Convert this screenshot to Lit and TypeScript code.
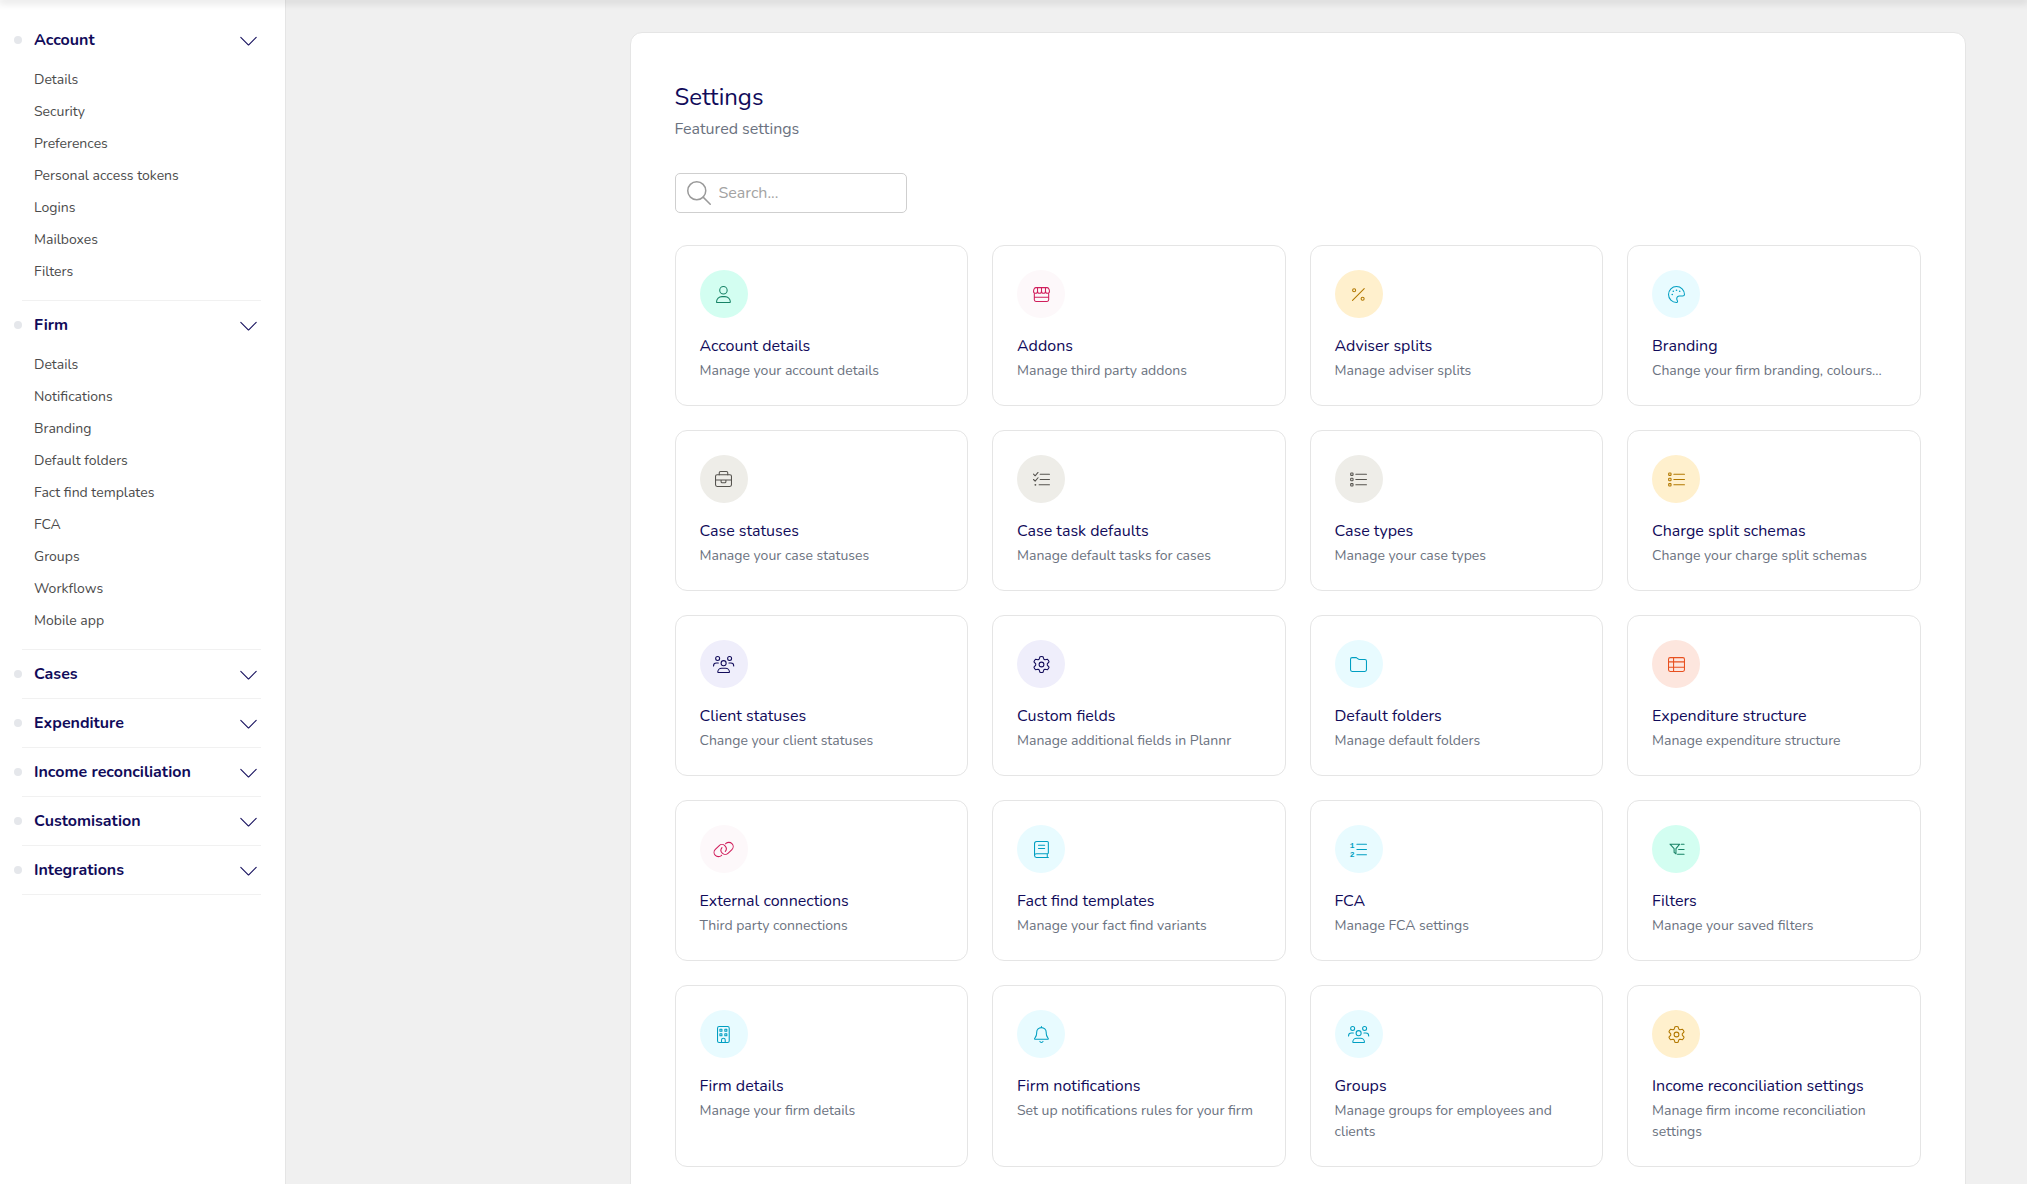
import { LitElement, html, css, svg, type SVGTemplateResult } from "lit";
import { customElement, property, state } from "lit/decorators.js";

interface Glyph {
  width: number;
  body: SVGTemplateResult;
}

// Every glyph is 512 units high; the width follows its own proportions.
const ICONS: Record<string, Glyph> = {
  user: {
    width: 448,
    body: svg`<circle cx="224" cy="128" r="112"/><path d="M16 482.300C16 392.700 88.700 320 178.300 320h91.400C359.300 320 432 392.700 432 482.300c0 7.600-6.100 13.700-13.700 13.700H29.700C22.100 496 16 489.900 16 482.300z"/>`,
  },
  shop: {
    width: 512,
    body: svg`<path d="M40 214v202c0 26 22 48 48 48h336c26 0 48-22 48-48V214M40 336h432M88 48h336c20 0 36 10 46 27 17 28 26 55 26 82 0 37-24 63-60 63s-60-26-60-63c0 37-24 63-60 63s-60-26-60-63c0 37-24 63-60 63s-60-26-60-63c0 37-24 63-60 63s-60-26-60-63c0-27 9-54 26-82 10-17 26-27 46-27zM136 157V48M256 157V48M376 157V48"/>`,
  },
  percent: {
    width: 384,
    body: svg`<path d="M368 80L16 432"/><circle cx="64" cy="128" r="46"/><circle cx="320" cy="384" r="46"/>`,
  },
  palette: {
    width: 512,
    body: svg`<path d="M496 256C496 123 388 16 256 16S16 123 16 256s107 240 240 240c4 0 7 0 10-.2 13-1 22-12 22-26 0-12-7-26-12-38-6-13-10-24-12-39-8-50 30-89 80-89h96c30 0 56-20 56-48z"/><circle class="dot" cx="128" cy="256" r="24"/><circle class="dot" cx="160" cy="160" r="24"/><circle class="dot" cx="256" cy="128" r="24"/><circle class="dot" cx="352" cy="160" r="24"/>`,
  },
  briefcase: {
    width: 512,
    body: svg`<rect x="16" y="112" width="480" height="352" rx="48"/><path d="M128 112V56c0-22 18-40 40-40h176c22 0 40 18 40 40v56M16 272h480M184 272v48c0 18 14 32 32 32h80c18 0 32-14 32-32v-48"/>`,
  },
  checklist: {
    width: 512,
    body: svg`<path d="M216 96h280M216 256h280M184 416h312M16 96l48 48 88-100M16 256l48 48 88-100"/><circle class="dot" cx="72" cy="416" r="28"/>`,
  },
  list: {
    width: 512,
    body: svg`<rect x="20" y="60" width="72" height="72" rx="20"/><rect x="20" y="220" width="72" height="72" rx="20"/><rect x="20" y="380" width="72" height="72" rx="20"/><path d="M176 96h320M176 256h320M176 416h320"/>`,
  },
  people: {
    width: 640,
    body: svg`<circle cx="140" cy="76" r="60"/><circle cx="500" cy="76" r="60"/><circle cx="320" cy="216" r="76"/><path d="M16 298c0-47 38-85 85-85h60M624 298c0-47-38-85-85-85h-60M144 485C144 420 197 368 262 368h116c65 0 118 52 118 117 0 6-5 11-11 11H155c-6 0-11-5-11-11z"/>`,
  },
  cog: {
    width: 512,
    body: svg`<path d="M210 24Q256 8 302 24L327 96 359 114 437 99Q474 132 483 178L430 238V274L483 334Q474 380 437 413L359 398 327 416 302 488Q256 504 210 488L185 416 153 398 75 413Q38 380 29 334L82 274V238L29 178Q38 132 75 99L153 114 185 96z"/><circle cx="256" cy="256" r="72"/>`,
  },
  folder: {
    width: 512,
    body: svg`<path d="M64 48h116c13 0 25 5 34 14l28 24c12 12 28 18 45 18h161c26 0 48 22 48 48v264c0 26-22 48-48 48H64c-26 0-48-22-48-48V96c0-26 22-48 48-48z"/>`,
  },
  table: {
    width: 512,
    body: svg`<rect x="16" y="48" width="480" height="416" rx="48"/><path d="M16 176h480M16 336h480M168 48v416"/>`,
  },
  link: {
    width: 640,
    body: svg`<path d="M378 84l12-12c46-40 131-42 180 5 50 50 50 130 0 180L459 368c-50 50-130 50-180 0-46-46-50-119-9-169M262 428l-12 12c-46 40-131 42-180-5-50-50-50-130 0-180L181 144c50-50 130-50 180 0 46 46 50 119 9 169"/>`,
  },
  book: {
    width: 448,
    body: svg`<path d="M16 440V80c0-35 29-64 64-64h320c18 0 32 14 32 32v304c0 18-14 32-32 32H72c-31 0-56 25-56 56s25 56 56 56h360M400 384v112M136 128h184M136 224h184"/>`,
  },
  numbered: {
    width: 512,
    body: svg`<path d="M208 96h288M208 256h288M208 416h288"/><text x="-8" y="208">1</text><text x="-8" y="480">2</text>`,
  },
  filter: {
    width: 512,
    body: svg`<path d="M60 96h292L240 232v156l-56-44V232zM400 96h84M320 256h164M288 400h196"/>`,
  },
  building: {
    width: 384,
    body: svg`<rect x="16" y="16" width="352" height="480" rx="48"/><rect x="88" y="100" width="60" height="60"/><rect x="236" y="100" width="60" height="60"/><rect x="88" y="232" width="60" height="60"/><rect x="236" y="232" width="60" height="60"/><path d="M136 496v-72c0-31 25-56 56-56s56 25 56 56v72"/>`,
  },
  bell: {
    width: 448,
    body: svg`<path d="M224 48C145 48 80 112 80 192v29c0 47-16 93-45 130l-14 17c-11 14-1 32 16 32h374c17 0 27-18 16-32l-14-17c-29-37-45-83-45-130v-29c0-80-65-144-144-144zM224 16v32M176 464c8 22 25 32 48 32s40-10 48-32"/>`,
  },
  chevron: {
    width: 512,
    body: svg`<path d="M24 160l232 232 232-232"/>`,
  },
  search: {
    width: 512,
    body: svg`<circle cx="208" cy="208" r="192"/><path d="M344 344l152 152"/>`,
  },
};

@customElement("line-icon")
export class LineIcon extends LitElement {
  static styles = css`
    :host {
      display: block;
      flex: none;
      height: var(--icon-size, 17px);
    }
    svg {
      display: block;
      height: 100%;
      fill: none;
      stroke: currentColor;
      stroke-width: 32;
      stroke-linecap: round;
      stroke-linejoin: round;
      overflow: visible;
    }
    .dot {
      fill: currentColor;
      stroke: none;
    }
    text {
      font: 700 240px "Liberation Mono", monospace;
      fill: currentColor;
      stroke: none;
    }
  `;

  @property() name = "";

  render() {
    const glyph = ICONS[this.name];
    return glyph
      ? html`<svg viewBox="0 0 ${glyph.width} 512" aria-hidden="true">${glyph.body}</svg>`
      : null;
  }
}

interface Section {
  title: string;
  items: string[];
}

const SECTIONS: Section[] = [
  {
    title: "Account",
    items: ["Details", "Security", "Preferences", "Personal access tokens", "Logins", "Mailboxes", "Filters"],
  },
  {
    title: "Firm",
    items: ["Details", "Notifications", "Branding", "Default folders", "Fact find templates", "FCA", "Groups", "Workflows", "Mobile app"],
  },
  { title: "Cases", items: [] },
  { title: "Expenditure", items: [] },
  { title: "Income reconciliation", items: [] },
  { title: "Customisation", items: [] },
  { title: "Integrations", items: [] },
];

@customElement("settings-nav")
export class SettingsNav extends LitElement {
  static styles = css`
    :host {
      display: block;
      padding: 16px 24px 16px 14px;
      background: #fff;
      border-right: 1px solid #e5e5e5;
      overflow-y: auto;
      scrollbar-width: none;
    }
    .section {
      display: grid;
      grid-template-columns: 8px 1fr;
    }
    .head {
      grid-column: 1 / -1;
      display: flex;
      align-items: center;
      gap: 12px;
      height: 48px;
      padding: 0 4px 0 0;
      border: 0;
      background: none;
      font: inherit;
      font-weight: 700;
      font-size: 16px;
      color: #110b5a;
      text-align: left;
      cursor: pointer;
    }
    .marker {
      width: 8px;
      height: 8px;
      border-radius: 50%;
      background: #e5e7eb;
    }
    .label {
      flex: 1;
    }
    .items {
      grid-column: 1 / -1;
      margin: 0;
      padding: 0 0 12px 20px;
      list-style: none;
    }
    .link {
      display: block;
      font-size: 14px;
      line-height: 32px;
      color: #4b4b4b;
      text-decoration: none;
    }
    .rule {
      grid-column: 2;
      height: 1px;
      background: #f1f1f1;
    }
  `;

  render() {
    return html`${SECTIONS.map(
      (s) => html`
        <div class="section">
          <button class="head" aria-expanded=${s.items.length > 0 ? "true" : "false"}>
            <span class="marker"></span>
            <span class="label">${s.title}</span>
            <line-icon name="chevron"></line-icon>
          </button>
          ${s.items.length
            ? html`<ul class="items">
                ${s.items.map((i) => html`<li><a class="link" href="#">${i}</a></li>`)}
              </ul>`
            : null}
          <div class="rule"></div>
        </div>
      `,
    )}`;
  }
}

type Tone = "green" | "pink" | "amber" | "cyan" | "stone" | "navy" | "orange";

interface Card {
  icon: string;
  tone: Tone;
  title: string;
  text: string;
}

const CARDS: Card[] = [
  { icon: "user", tone: "green", title: "Account details", text: "Manage your account details" },
  { icon: "shop", tone: "pink", title: "Addons", text: "Manage third party addons" },
  { icon: "percent", tone: "amber", title: "Adviser splits", text: "Manage adviser splits" },
  { icon: "palette", tone: "cyan", title: "Branding", text: "Change your firm branding, colours..." },
  { icon: "briefcase", tone: "stone", title: "Case statuses", text: "Manage your case statuses" },
  { icon: "checklist", tone: "stone", title: "Case task defaults", text: "Manage default tasks for cases" },
  { icon: "list", tone: "stone", title: "Case types", text: "Manage your case types" },
  { icon: "list", tone: "amber", title: "Charge split schemas", text: "Change your charge split schemas" },
  { icon: "people", tone: "navy", title: "Client statuses", text: "Change your client statuses" },
  { icon: "cog", tone: "navy", title: "Custom fields", text: "Manage additional fields in Plannr" },
  { icon: "folder", tone: "cyan", title: "Default folders", text: "Manage default folders" },
  { icon: "table", tone: "orange", title: "Expenditure structure", text: "Manage expenditure structure" },
  { icon: "link", tone: "pink", title: "External connections", text: "Third party connections" },
  { icon: "book", tone: "cyan", title: "Fact find templates", text: "Manage your fact find variants" },
  { icon: "numbered", tone: "cyan", title: "FCA", text: "Manage FCA settings" },
  { icon: "filter", tone: "green", title: "Filters", text: "Manage your saved filters" },
  { icon: "building", tone: "cyan", title: "Firm details", text: "Manage your firm details" },
  { icon: "bell", tone: "cyan", title: "Firm notifications", text: "Set up notifications rules for your firm" },
  { icon: "people", tone: "cyan", title: "Groups", text: "Manage groups for employees and clients" },
  { icon: "cog", tone: "amber", title: "Income reconciliation settings", text: "Manage firm income reconciliation settings" },
];

@customElement("app-root")
export class AppRoot extends LitElement {
  static styles = css`
    :host {
      display: grid;
      grid-template-columns: 286px minmax(0, 1fr);
      grid-template-rows: minmax(0, 1fr);
      height: 100vh;
      box-sizing: border-box;
      overflow: hidden;
      background: #f0f0f0;
      font-family: Nunito, Lato, "Open Sans", sans-serif;
      font-size: 16px;
      line-height: 24px;
      color: #110b5a;
    }
    .topshade {
      position: absolute;
      top: 0;
      left: 0;
      right: 0;
      height: 0;
      box-shadow: 0 0 8px 2px rgba(0, 0, 0, 0.18);
      z-index: 1;
    }
    settings-nav {
      box-sizing: border-box;
    }
    .main {
      padding: 32px 61px 32px 343px;
      overflow-y: auto;
      scrollbar-width: none;
    }
    .panel {
      box-sizing: border-box;
      max-width: 1336px;
      margin: 0 auto;
      padding: 48px 44px 44px;
      border: 1px solid #e5e5e5;
      border-radius: 12px;
      background: #fff;
    }
    .title {
      margin: 0;
      font-size: 24px;
      line-height: 32px;
      font-weight: 400;
    }
    .sub {
      margin: 4px 0 32px;
      color: #6b7280;
    }
    .search {
      --icon-size: 24px;
      display: flex;
      align-items: center;
      gap: 8px;
      box-sizing: border-box;
      width: 232px;
      height: 40px;
      margin-bottom: 32px;
      padding: 0 11px;
      border: 1px solid #cfcfcf;
      border-radius: 5px;
      color: #9a9a9a;
    }
    .field {
      flex: 1;
      min-width: 0;
      padding: 0;
      border: 0;
      outline: 0;
      background: none;
      font: inherit;
      color: #110b5a;
    }
    .field::placeholder {
      color: #a3a3a3;
      opacity: 1;
    }
    .grid {
      display: grid;
      grid-template-columns: repeat(4, minmax(0, 1fr));
      gap: 24px;
    }
    .card {
      padding: 24px;
      border: 1px solid #e5e5e5;
      border-radius: 12px;
      color: inherit;
      text-decoration: none;
    }
    .badge {
      display: flex;
      align-items: center;
      justify-content: center;
      width: 48px;
      height: 48px;
      margin-bottom: 16px;
      border-radius: 50%;
    }
    .name {
      margin: 0 0 2px;
      font-size: 16px;
      line-height: 24px;
      font-weight: 400;
    }
    .text {
      margin: 0;
      font-size: 14px;
      line-height: 21px;
      color: #6b7280;
    }
    .green { background: #d3fef1; color: #178366; }
    .pink { background: #fdf8fa; color: #d01e5c; }
    .amber { background: #fff0cd; color: #b27800; }
    .cyan { background: #e8fbff; color: #009fc2; }
    .stone { background: #eeede8; color: #55534e; }
    .navy { background: #efeefb; color: #110b5a; }
    .orange { background: #fde6de; color: #e8501f; }
  `;

  @state() private query = "";

  private onInput(e: Event) {
    this.query = (e.target as HTMLInputElement).value;
  }

  render() {
    const q = this.query.trim().toLowerCase();
    const cards = CARDS.filter((c) => `${c.title} ${c.text}`.toLowerCase().includes(q));
    return html`
      <div class="topshade"></div>
      <settings-nav role="navigation"></settings-nav>
      <main class="main">
        <section class="panel">
          <h1 class="title">Settings</h1>
          <p class="sub">Featured settings</p>
          <label class="search">
            <line-icon name="search"></line-icon>
            <input class="field" type="text" placeholder="Search..." aria-label="Search" @input=${this.onInput} />
          </label>
          <div class="grid">
            ${cards.map(
              (c) => html`
                <a class="card" href="#">
                  <div class="badge ${c.tone}"><line-icon name=${c.icon}></line-icon></div>
                  <h2 class="name">${c.title}</h2>
                  <p class="text">${c.text}</p>
                </a>
              `,
            )}
          </div>
        </section>
      </main>
    `;
  }
}
